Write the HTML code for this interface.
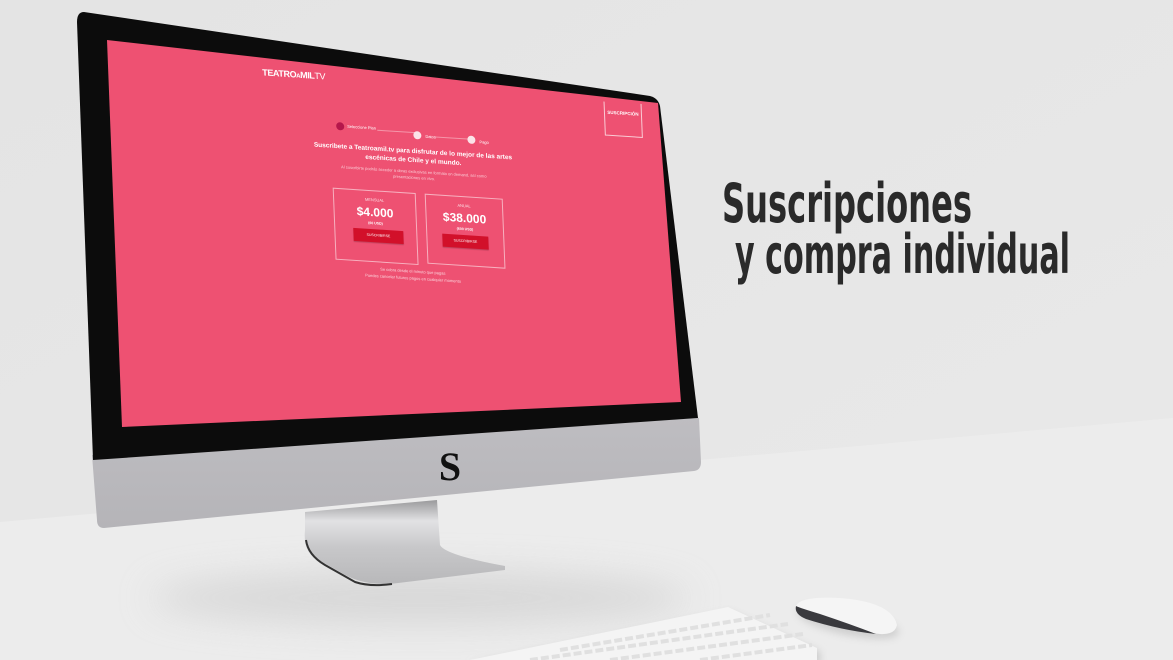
<!DOCTYPE html>
<html><head><meta charset="utf-8"><style>
html,body{margin:0;padding:0;width:1173px;height:660px;overflow:hidden;}
body{position:relative;background:#e6e6e6;font-family:"Liberation Sans",sans-serif;}
svg{position:absolute;left:0;top:0;}
#wrap{position:absolute;left:0;top:0;width:1173px;height:660px;overflow:hidden;}
#scr{position:absolute;left:0;top:0;width:1173px;height:660px;transform-origin:0 0;transform:matrix(1,0.065,0.04,1,-8,-26);color:#fff;}
#scr div{position:absolute;white-space:nowrap;}
.c{text-align:center;}
.card{border:1px solid rgba(255,255,255,0.55);box-sizing:border-box;}
.btn{background:#d2102a;color:#fff;font-size:3.5px;text-align:center;line-height:13px;box-shadow:0 1px 1px rgba(0,0,0,.2);}
.dot{width:8px;height:8px;border-radius:50%;background:#fbe3e8;}
</style></head><body>
<div id="wrap">
<svg width="1173" height="660" viewBox="0 0 1173 660">
<defs>
<linearGradient id="wall" x1="0" y1="0" x2="1" y2="1"><stop offset="0" stop-color="#e4e4e4"/><stop offset="1" stop-color="#e9e9e9"/></linearGradient>
<linearGradient id="stand" x1="0" y1="0" x2="0" y2="1"><stop offset="0" stop-color="#9a9a9c"/><stop offset="0.25" stop-color="#e2e2e4"/><stop offset="0.55" stop-color="#c8c8ca"/><stop offset="1" stop-color="#b8b8ba"/></linearGradient>
<linearGradient id="chin" x1="0" y1="0" x2="0" y2="1"><stop offset="0" stop-color="#bebdc1"/><stop offset="1" stop-color="#b5b4b8"/></linearGradient>
<filter id="blur" x="-50%" y="-300%" width="200%" height="700%"><feGaussianBlur stdDeviation="18"/></filter>
<filter id="blur2" x="-50%" y="-100%" width="200%" height="300%"><feGaussianBlur stdDeviation="4"/></filter>
</defs>
<rect width="1173" height="660" fill="url(#wall)"/>
<polygon points="0,522 1173,418 1173,660 0,660" fill="#ececec"/>
<ellipse cx="420" cy="598" rx="270" ry="26" fill="#d2d2d2" filter="url(#blur)" opacity="0.8"/>
<path d="M305,512 L437,500 L440,545 Q445,555 505,566 L505,570 L390,584 Q360,585 340,572 L315,558 Q303,550 305,530 Z" fill="url(#stand)"/>
<path d="M306,540 Q308,555 325,565 L355,582 Q370,587 392,584" fill="none" stroke="#333" stroke-width="2"/>
<path d="M92,455 L699,418 L701,462 Q701,470 694,471 L104,528 Q97,528 97,520 Z" fill="url(#chin)"/>
<path d="M84,12 L650,96 Q658,98 660,106 L698,418 L93,460 L77,22 Q77,12 84,12 Z" fill="#0c0c0c"/>
<polygon points="107,40 658,103 681,402 122,427" fill="#ee5172"/>
<text x="450" y="480" font-family="Liberation Serif,serif" font-weight="bold" font-size="40" fill="#111" text-anchor="middle">S</text>
<text x="722" y="222" font-family="DejaVu Sans Condensed,DejaVu Sans,sans-serif" font-weight="bold" font-size="54" fill="#2a2a2a" textLength="250" lengthAdjust="spacingAndGlyphs">Suscripciones</text>
<text x="735" y="273" font-family="DejaVu Sans Condensed,DejaVu Sans,sans-serif" font-weight="bold" font-size="54" fill="#2a2a2a" textLength="335" lengthAdjust="spacingAndGlyphs">y compra individual</text>
<polygon points="470,664 730,612 820,652 820,664" fill="#c9c9c9" filter="url(#blur2)"/>
<polygon points="470,660 728,607 817,648 817,660" fill="#f4f4f4"/>
<g stroke="#e0e0e0" stroke-width="4" stroke-dasharray="8,3">
<line x1="560" y1="650" x2="770" y2="615"/>
<line x1="530" y1="660" x2="788" y2="624"/>
<line x1="610" y1="660" x2="803" y2="634"/>
<line x1="700" y1="660" x2="812" y2="645"/>
</g>
<ellipse cx="848" cy="622" rx="52" ry="13" fill="#cfcfcf" filter="url(#blur2)" transform="rotate(12 848 622)"/>
<path d="M796,606 Q800,596 840,598 Q892,602 897,625 Q895,635 880,634 Q840,630 805,618 Q794,613 796,606 Z" fill="#f5f5f5"/>
<path d="M796,606 Q794,614 806,619 Q840,630 876,634 Q850,624 820,614 Q800,608 796,606 Z" fill="#3a3a3e"/>
</svg>
<div id="scr">
<div style="left:267px;top:76px;font-size:9px;font-weight:bold;letter-spacing:-0.4px">TEATRO<span style="font-size:6px">A</span>MIL<span style="font-weight:normal">TV</span></div>
<div class="dot" style="left:339px;top:126px;background:#b5174b"></div>
<div style="left:350px;top:127px;font-size:4px">Seleccione Plan</div>
<div style="left:380px;top:131px;width:38px;height:1px;background:rgba(255,255,255,.4)"></div>
<div class="dot" style="left:416px;top:130px"></div>
<div style="left:428px;top:132px;font-size:4px">Datos</div>
<div style="left:438px;top:134px;width:32px;height:1px;background:rgba(255,255,255,.4)"></div>
<div class="dot" style="left:470px;top:131px"></div>
<div style="left:482px;top:134px;font-size:4px">Pago</div>
<div class="c" style="left:315px;top:146px;width:200px;font-size:6.5px;font-weight:bold;line-height:9px">Suscribete a Teatroamil.tv para disfrutar de lo mejor de las artes<br>escénicas de Chile y el mundo.</div>
<div class="c" style="left:315px;top:168px;width:200px;font-size:4px;line-height:6px;color:rgba(255,255,255,.7)">Al suscribirte podrás acceder a obras exclusivas en formato on demand, así como<br>presentaciones en vivo.</div>
<div class="card" style="left:333px;top:192px;width:83px;height:72px"></div>
<div class="c" style="left:333px;top:199px;width:83px;font-size:4px;color:rgba(255,255,255,.8)">MENSUAL</div>
<div class="c" style="left:333px;top:207px;width:83px;font-size:12px;font-weight:bold">$4.000</div>
<div class="c" style="left:333px;top:223px;width:83px;font-size:3.5px;font-weight:bold">(60 USD)</div>
<div class="btn" style="left:352px;top:231px;width:50px;height:13px">SUSCRIBIRSE</div>
<div class="card" style="left:425px;top:192px;width:78px;height:70px"></div>
<div class="c" style="left:425px;top:199px;width:78px;font-size:4px;color:rgba(255,255,255,.8)">ANUAL</div>
<div class="c" style="left:425px;top:207px;width:78px;font-size:12px;font-weight:bold">$38.000</div>
<div class="c" style="left:425px;top:223px;width:78px;font-size:3.5px;font-weight:bold">(600 USD)</div>
<div class="btn" style="left:441px;top:231px;width:46px;height:13px">SUSCRIBIRSE</div>
<div class="c" style="left:310px;top:267px;width:200px;font-size:4px;line-height:7px;color:rgba(255,255,255,.75)">Se cobra desde el minuto que pagas<br>Puedes cancelar futuros pagos en cualquier momento</div>
<div style="left:608px;top:88px;width:38px;height:34px;border:1px solid rgba(255,255,255,.7);border-top:none;font-size:4.5px;font-weight:bold;text-align:center;padding-top:8px;box-sizing:border-box">SUSCRIPCIÓN</div>
</div>
</div>
</body></html>
